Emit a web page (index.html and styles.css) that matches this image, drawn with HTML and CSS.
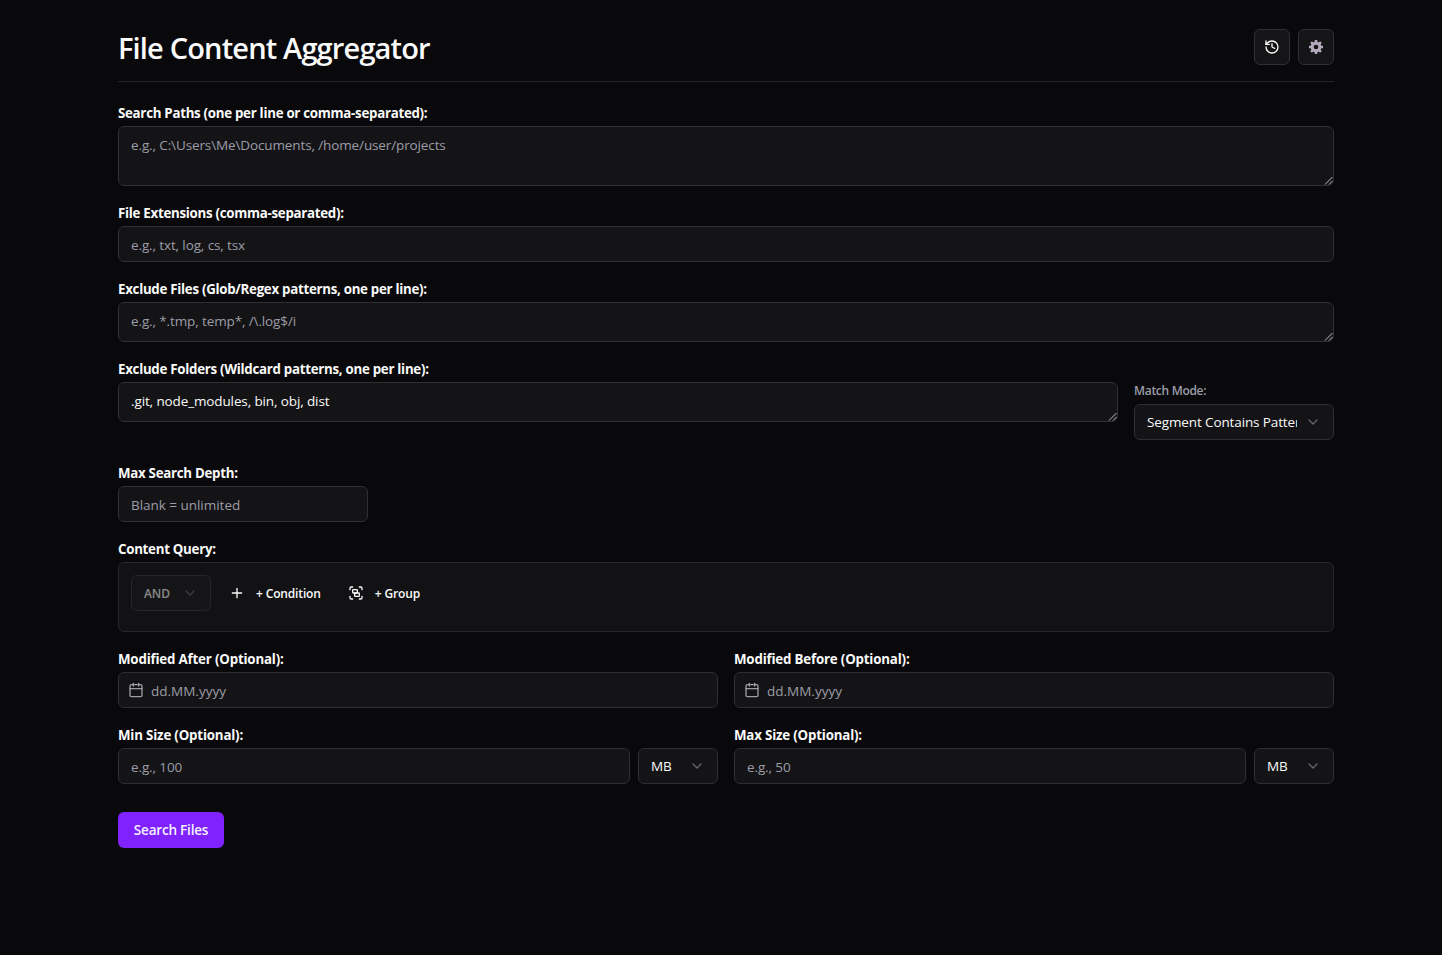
FILE: index.html
```
<!DOCTYPE html>
<html lang="en">
<head>
<meta charset="utf-8">
<title>File Content Aggregator</title>
<link rel="stylesheet" href="styles.css">
</head>
<body>
<svg class="sprite" aria-hidden="true">
  <symbol id="chevron" viewBox="0 0 24 24"><path d="m6 9 6 6 6-6"/></symbol>
  <symbol id="calendar" viewBox="0 0 24 24"><path d="M8 2v4M16 2v4M3 10h18"/><rect x="3" y="4" width="18" height="18" rx="2"/></symbol>
  <symbol id="grip" viewBox="0 0 9 9"><path d="M1 8.5 8.5 1M5 8.5 8.5 5"/></symbol>
</svg>
<main class="app">
  <header class="header">
    <h1 class="title">File Content Aggregator</h1>
    <div class="actions">
      <button class="icon-btn" aria-label="History"><svg class="icon" viewBox="0 0 24 24"><path d="M3 12a9 9 0 1 0 9-9 9.75 9.75 0 0 0-6.74 2.74L3 8"/><path d="M3 3v5h5"/><path d="M12 7v5l4 2"/></svg></button>
      <button class="icon-btn" aria-label="Settings"><svg class="gear" viewBox="0 0 16 16"><g class="teeth"><path d="M8 1v14M1 8h14M3.05 3.05l9.9 9.9M12.95 3.05l-9.9 9.9"/></g><circle class="gear-body" cx="8" cy="8" r="5.4"/><circle class="gear-hole" cx="8" cy="8" r="2.3"/></svg></button>
    </div>
  </header>
  <form class="form">
    <div class="field">
      <label class="label">Search Paths (one per line or comma-separated):</label>
      <div class="area"><textarea class="control tall" placeholder="e.g., C:\Users\Me\Documents, /home/user/projects"></textarea><svg class="grip"><use href="#grip"/></svg></div>
    </div>
    <div class="field">
      <label class="label">File Extensions (comma-separated):</label>
      <input class="control" placeholder="e.g., txt, log, cs, tsx">
    </div>
    <div class="field">
      <label class="label">Exclude Files (Glob/Regex patterns, one per line):</label>
      <div class="area"><textarea class="control short" placeholder="e.g., *.tmp, temp*, /\.log$/i"></textarea><svg class="grip"><use href="#grip"/></svg></div>
    </div>
    <div class="field">
      <label class="label">Exclude Folders (Wildcard patterns, one per line):</label>
      <div class="folders">
        <div class="area"><textarea class="control short">.git, node_modules, bin, obj, dist</textarea><svg class="grip"><use href="#grip"/></svg></div>
        <div class="mode">
          <label class="sublabel">Match Mode:</label>
          <div class="select"><span class="value">Segment Contains Pattern</span><svg class="icon chevron"><use href="#chevron"/></svg></div>
        </div>
      </div>
    </div>
    <div class="field">
      <label class="label">Max Search Depth:</label>
      <input class="control depth" placeholder="Blank = unlimited">
    </div>
    <div class="field">
      <label class="label">Content Query:</label>
      <div class="query">
        <div class="select unit disabled"><span class="value small">AND</span><svg class="icon chevron"><use href="#chevron"/></svg></div>
        <button type="button" class="ghost condition"><svg class="icon" viewBox="0 0 24 24"><path d="M5 12h14M12 5v14"/></svg><span class="ghost-text">+ Condition</span></button>
        <button type="button" class="ghost"><svg class="icon" viewBox="0 0 24 24"><path d="M3 7V5c0-1.1.9-2 2-2h2M17 3h2c1.1 0 2 .9 2 2v2M21 17v2c0 1.1-.9 2-2 2h-2M7 21H5c-1.1 0-2-.9-2-2v-2"/><rect x="7" y="7" width="7" height="5" rx="1"/><rect x="10" y="12" width="7" height="5" rx="1"/></svg><span class="ghost-text">+ Group</span></button>
      </div>
    </div>
    <div class="pair">
      <div class="field">
        <label class="label">Modified After (Optional):</label>
        <div class="control date"><svg class="icon"><use href="#calendar"/></svg><span class="date-text">dd.MM.yyyy</span></div>
      </div>
      <div class="field">
        <label class="label">Modified Before (Optional):</label>
        <div class="control date"><svg class="icon"><use href="#calendar"/></svg><span class="date-text">dd.MM.yyyy</span></div>
      </div>
    </div>
    <div class="pair">
      <div class="field">
        <label class="label">Min Size (Optional):</label>
        <div class="size"><input class="control" placeholder="e.g., 100"><div class="select unit"><span class="value">MB</span><svg class="icon chevron"><use href="#chevron"/></svg></div></div>
      </div>
      <div class="field">
        <label class="label">Max Size (Optional):</label>
        <div class="size"><input class="control" placeholder="e.g., 50"><div class="select unit"><span class="value">MB</span><svg class="icon chevron"><use href="#chevron"/></svg></div></div>
      </div>
    </div>
    <button type="button" class="submit">Search Files</button>
  </form>
</main>
</body>
</html>
```
FILE: styles.css
```
* { box-sizing: border-box; }
body { margin: 0; background: #09090b; color: #fafafa; font: 400 13.5px/20px "Segoe UI", "Open Sans", "Noto Sans", sans-serif; letter-spacing: -0.12px; }
button, input, textarea { font: inherit; letter-spacing: inherit; color: inherit; margin: 0; }
.sprite { position: absolute; width: 0; height: 0; }
.app { width: 1216px; margin-left: 118px; padding-top: 29px; }
.header { display: flex; justify-content: space-between; align-items: flex-start; height: 53px; border-bottom: 1px solid #242427; }
.title { margin: 0; font-size: 29px; line-height: 38px; font-weight: 600; letter-spacing: -0.84px; white-space: nowrap; }
.actions { display: flex; gap: 8px; }
.icon-btn { display: flex; align-items: center; justify-content: center; width: 36px; height: 36px; padding: 0; background: #151517; border: 1px solid #303033; border-radius: 6px; }
.icon { display: block; flex: none; width: 16px; height: 16px; fill: none; stroke: currentColor; stroke-width: 2; stroke-linecap: round; stroke-linejoin: round; }
.gear { width: 16px; height: 16px; }
.teeth { stroke: #b4a9bd; stroke-width: 2.6; }
.gear-body { fill: #b4a9bd; }
.gear-hole { fill: #151517; }
.form { display: flex; flex-direction: column; gap: 20px; margin-top: 24px; }
.field { display: flex; flex-direction: column; gap: 6px; min-width: 0; }
.label { font-size: 13.3px; font-weight: 700; line-height: 14px; letter-spacing: -0.28px; white-space: nowrap; }
.pair .label { letter-spacing: -0.18px; }
.control { display: block; width: 100%; height: 36px; padding: 1px 12px 0; background: #141416; border: 1px solid #303033; border-radius: 6px; outline: 0; resize: none; overflow: hidden; }
.control::placeholder, .date { color: #9c9ca8; opacity: 1; }
textarea.control { padding: 8px 12px; }
.control.tall { height: 60px; }
.control.short { height: 40px; }
.control.depth { width: 250px; letter-spacing: -0.03px; }
.area { position: relative; align-self: start; width: 100%; min-width: 0; }
.grip { position: absolute; right: 1px; bottom: 1px; width: 9px; height: 9px; fill: none; stroke: #bcbcbe; stroke-width: 1; }
.folders { display: grid; grid-template-columns: 1000px 200px; gap: 16px; padding-bottom: 6px; }
.mode { display: flex; flex-direction: column; gap: 7px; padding-top: 3px; }
.sublabel { font-size: 12px; line-height: 12px; font-weight: 600; letter-spacing: -0.3px; color: #9c9ca8; }
.select { display: flex; align-items: center; justify-content: space-between; gap: 8px; height: 36px; padding: 0 12px; background: #141416; border: 1px solid #303033; border-radius: 6px; }
.value { overflow: hidden; white-space: nowrap; }
.value.small { position: relative; top: 1px; font-size: 12px; font-weight: 600; letter-spacing: -0.1px; }
.chevron { color: #a6a6b0; opacity: .55; }
.unit { width: 80px; flex: none; }
.disabled { opacity: .5; }
.query { display: flex; align-items: flex-start; height: 70px; padding: 12px; background: #121214; border: 1px solid #27272a; border-radius: 6px; }
.disabled.select { background: #19191b; border-color: #3a3a3d; }
.ghost { display: flex; align-items: center; gap: 11px; height: 36px; padding: 0; border: 0; background: none; font-size: 12px; font-weight: 600; letter-spacing: -0.15px; margin-left: 27px; }
.ghost.condition { margin-left: 18px; }
.ghost-text, .date-text { padding-top: 2px; }
.pair { display: grid; grid-template-columns: 1fr 1fr; gap: 16px; }
.date { display: flex; align-items: center; gap: 7px; padding: 0 9px; letter-spacing: 0; }
.size { display: flex; gap: 8px; }
.submit { align-self: flex-start; width: 106px; height: 36px; margin-top: 8px; padding: 0; border: 0; border-radius: 6px; background: #7f22fe; font-weight: 600; letter-spacing: -0.2px; color: #f5f3ff; }
```
